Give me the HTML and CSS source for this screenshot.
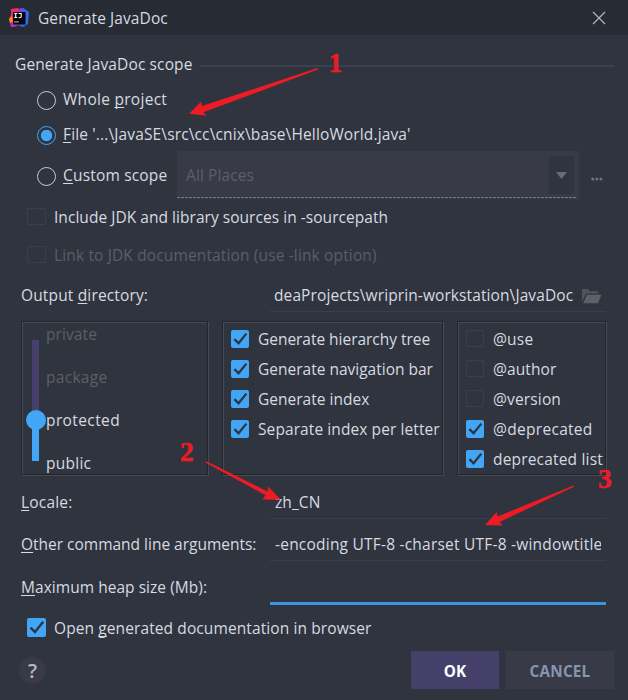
FILE: index.html
```
<!DOCTYPE html>
<html lang="en">
<head>
<meta charset="utf-8">
<title>Generate JavaDoc</title>
<link rel="stylesheet" href="styles.css">
</head>
<body>
<svg class="defs" width="0" height="0"><defs>
  <symbol id="tick" viewBox="0 0 19 19"><path d="M3.6 9.6 8 14 16.2 3.8" fill="none" stroke="#2d3440" stroke-width="2.4"/></symbol>
</defs></svg>
<div class="dialog">
  <header class="titlebar">
    <svg class="logo" viewBox="0 0 20 20">
      <path d="M2 1 9 0 14 5 8 18 2 19 1 14 0 11 2 7Z" fill="#f5266b"/>
      <path d="M0 11 3 8 4 15 1 15Z" fill="#ff8a1c"/>
      <path d="M2 14 6 14 8 18 2 19Z" fill="#b52fc4"/>
      <path d="M10 1 14 0 20 4 19 16 14 19 8 17Z" fill="#3569ee"/>
      <path d="M10 1 14 0 17 3 11 5Z" fill="#6a4be0"/>
      <rect x="4" y="4" width="12.5" height="12.5" fill="#050505"/>
      <path d="M5.2 5.5h3M6.7 5.5v4M5.2 9.5h3M9.5 5.5h2.7v3.1q0 1.1-1.8 1.1h-.8" stroke="#fff" stroke-width="1.1" fill="none"/>
      <path d="M5.3 13.9h4.6" stroke="#a5a5a5" stroke-width="1.2"/>
    </svg>
    <h1 class="name">Generate JavaDoc</h1>
    <svg class="close" viewBox="0 0 14 14"><path d="M1 1 13 13M13 1 1 13" stroke="#b4b6b9" stroke-width="1.2"/></svg>
  </header>

  <div class="group-title"><span class="t-scope">Generate JavaDoc scope</span><i class="rule"></i></div>

  <label class="radio-row"><i class="radio"></i><span class="t-whole">Whole <u>p</u>roject</span></label>
  <label class="radio-row file"><i class="radio on"></i><span class="t-file"><u>F</u>ile '...\JavaSE\src\cc\cnix\base\HelloWorld.java'</span></label>
  <div class="radio-row custom">
    <i class="radio"></i><span class="t-custom"><u>C</u>ustom scope</span>
    <div class="combo"><span class="t-places">All Places</span>
      <div class="combo-button"><svg viewBox="0 0 11 7"><path d="M0 0H11L5.5 7Z" fill="#696c76"/></svg></div>
      <svg class="dashes" viewBox="0 0 400 1"><path d="M0 .5H400" stroke="#777a86" stroke-dasharray="3 1"/></svg>
    </div>
    <svg class="more" viewBox="0 0 12 4"><g fill="#6f727a"><circle cx="1.7" cy="2" r="1.5"/><circle cx="5.8" cy="2" r="1.5"/><circle cx="9.9" cy="2" r="1.5"/></g></svg>
  </div>

  <label class="check-row include"><i class="box"></i><span class="t-include">Include JDK and library sources in -sourcepath</span></label>
  <label class="check-row link"><i class="box"></i><span class="t-link">Link to JDK documentation (use -link option)</span></label>

  <div class="field-row output">
    <span class="t-output">Output <u>d</u>irectory:</span>
    <div class="field"><div class="clip"><span class="t-path">deaProjects\wriprin-workstation\JavaDoc</span></div>
      <svg class="folder" viewBox="0 0 20 15"><path d="M0 13V1.2Q0 0 1.2 0H6L8 2.2H15Q16.3 2.2 16.3 3.5V4.5H5.2Q4.2 4.5 3.7 5.5Z" fill="#50555c"/><path d="M5 5.7H19.5L16 14.3H1.2Z" fill="#5a6168"/></svg>
    </div>
  </div>

  <div class="panels">
    <section class="panel levels">
      <div class="slider"><i class="fill"></i><i class="knob"></i></div>
      <div class="level-names">
        <span class="off t-private">private</span><span class="off t-package">package</span><span class="t-protected">protected</span><span class="t-public">public</span>
      </div>
    </section>
    <section class="panel options">
      <label><i class="box on"><svg><use href="#tick"/></svg></i><span class="t-tree">Generate hierarchy tree</span></label>
      <label><i class="box on"><svg><use href="#tick"/></svg></i><span class="t-nav">Generate navigation bar</span></label>
      <label><i class="box on"><svg><use href="#tick"/></svg></i><span class="t-index">Generate index</span></label>
      <label><i class="box on"><svg><use href="#tick"/></svg></i><span class="t-letter">Separate index per letter</span></label>
    </section>
    <section class="panel tags">
      <label><i class="box"></i><span class="t-use">@use</span></label>
      <label><i class="box"></i><span class="t-author">@author</span></label>
      <label><i class="box"></i><span class="t-version">@version</span></label>
      <label><i class="box on"><svg><use href="#tick"/></svg></i><span class="t-dep">@deprecated</span></label>
      <label><i class="box on"><svg><use href="#tick"/></svg></i><span class="t-list">deprecated list</span></label>
    </section>
  </div>

  <div class="field-row locale"><span class="t-locale"><u>L</u>ocale:</span><div class="field"><span class="t-zh">zh_CN</span></div></div>
  <div class="field-row other"><span class="t-other"><u>O</u>ther command line arguments:</span><div class="field"><div class="clip"><span class="t-args">-encoding UTF-8 -charset UTF-8 -windowtitle</span></div></div></div>
  <div class="field-row heap"><span class="t-heap"><u>M</u>aximum heap size (Mb):</span><div class="field focus"></div></div>

  <label class="check-row open"><i class="box on"><svg><use href="#tick"/></svg></i><span class="t-open">Open <u>g</u>enerated documentation in browser</span></label>

  <footer class="footer">
    <div class="help">?</div>
    <div class="button primary">OK</div>
    <div class="button cancel">CANCEL</div>
  </footer>

  <svg class="marks" viewBox="0 0 628 700">
    <g fill="#ed1c24">
      <path d="M189 113.8 201 101.7 202 106 317.5 68 318 69.6 203.5 112.2 206.7 115.8Z"/>
      <path d="M280.7 499.7 268.3 486.5 267.5 491.5 206.5 461.3 205.8 462.8 265.5 495.2 262.5 499.5Z"/>
      <path d="M485 525 496.7 512 497.5 516.5 573.5 485.4 574 486.8 499.7 522 502.7 525.6Z"/>
    </g>
    <g class="digits"><text x="328.5" y="72">1</text><text x="180" y="460.5">2</text><text x="598" y="488">3</text></g>
  </svg>
</div>
</body>
</html>
```
FILE: styles.css
```
* { box-sizing: border-box; }
body {
  margin: 0;
  background: #30343e;
  color: #d6dae1;
  font: 15.5px/24px "Open Sans", "Noto Sans", sans-serif;
}
.defs { position: absolute; }
i { display: block; flex: none; }
svg { display: block; flex: none; }
span { white-space: nowrap; }
u { text-underline-offset: 2px; text-decoration-thickness: 1px; text-decoration-skip-ink: none; }

.dialog { position: relative; width: 628px; height: 700px; overflow: hidden; }

.titlebar { display: flex; align-items: center; height: 35px; padding: 0 22px 0 9px; background: #272b33; }
.logo { width: 20px; height: 20px; }
.name { flex: 1; margin: 0 0 0 9px; font-size: 15.5px; font-weight: 400; letter-spacing: .08px; }
.close { width: 14px; height: 14px; }

.group-title { display: flex; align-items: center; gap: 7px; height: 24px; margin: 17px 14px 0 15px; }
.rule { flex: 1; height: 2px; margin-top: 4px; background: #3b3f4e; }

.radio-row { display: flex; align-items: center; height: 30px; margin: 8px 0 0 37px; }
.radio-row span { margin-left: 7px; }
.radio-row.file { margin-top: 5px; }
.radio-row.custom { height: 48px; margin-top: 2px; padding-right: 25px; }
.radio { width: 19px; height: 19px; margin-top: 2px; border: 1.5px solid #c8cbd6; border-radius: 50%; }
.radio.on { border-color: #42a5f5; background: radial-gradient(circle, #42a5f5 5.3px, transparent 6.1px); }
.combo { position: relative; display: flex; align-items: center; width: 402px; height: 48px; margin-left: auto; background: #383a48; color: #5c5f6b; }
.combo-button { display: flex; align-items: center; justify-content: center; width: 25px; height: 38px; margin: 0 5px 0 auto; background: #30343e; }
.combo-button svg { width: 11px; height: 7px; }
.dashes { position: absolute; left: 0; bottom: 1px; width: 400px; height: 1px; }
.more { width: 12px; height: 4px; margin: 8px 0 0 12px; }

.check-row { display: flex; align-items: center; gap: 8px; height: 26px; margin-left: 27px; }
.include { margin-top: 5px; }
.link { margin-top: 12px; color: #5b5e67; }
.open { margin-top: 11px; }
.box { width: 19px; height: 17px; margin-top: -2px; border: 1px solid #3b3e4d; border-radius: 1px; }
.box.on { height: 19px; margin-top: -1px; border: 0; border-radius: 2px; background: #42a5f5; }
.box svg { width: 100%; height: 100%; }

.field-row { display: grid; grid-template-columns: 249px 336px; align-items: start; margin-left: 21px; }
.field { display: flex; height: 29px; padding-left: 4px; border-bottom: 1px solid #3b3e4d; }
.clip { width: 327px; overflow: hidden; }
.output { margin-top: 15px; }
.output .clip { width: 300px; }
.folder { width: 20px; height: 15px; margin: 6px 0 0 8px; }

.panels { display: grid; grid-template: 154px / 187px 221px 149px; gap: 14px; margin: 9px 0 0 21px; }
.panel { min-width: 0; border: 1px solid #22252c; box-shadow: 1px 1px #464a55, inset 1px 1px #464a55; }
.levels { display: flex; }
.slider { position: relative; width: 7px; height: 121px; margin: 18px 0 0 10px; background: #45416a; }
.fill { height: 41px; margin-top: 80px; background: #42a5f5; }
.knob { position: absolute; left: -6px; top: 70px; width: 20px; height: 20px; border-radius: 50%; background: #42a5f5; }
.level-names { display: flex; flex-direction: column; gap: 19px; margin-left: 7px; }
.off { color: #5e5f63; }
.options, .tags { padding: 2px 0 0 8px; }
.panel label { display: flex; align-items: center; gap: 9px; height: 30px; }
.panel .box { width: 18px; }
.panel .box.on { height: 18px; }

.locale { margin-top: 15px; }
.other { margin-top: 13px; }
.heap { margin-top: 14px; }
.field.focus { height: 30px; margin-bottom: -1px; border-bottom: 3px solid #3c94dc; }

.footer { display: flex; align-items: center; gap: 7px; height: 38px; margin: 10px 14px 0 19px; }
.help { width: 27px; height: 27px; margin-right: auto; border-radius: 50%; background: #383a48; color: #b7b9bf; font: 600 20px/27px "Open Sans", sans-serif; text-align: center; }
.button { height: 38px; font-size: 15.3px; font-weight: 700; line-height: 41px; text-align: center; }
.primary { width: 88px; background: #44406a; color: #fff; }
.cancel { width: 108px; background: #383a48; color: #8496b0; letter-spacing: .2px; }

.marks { position: absolute; inset: 0; width: 628px; height: 700px; }
.digits { fill: #ed1c24; stroke: #ed1c24; stroke-width: .5px; font: 700 27.5px "Liberation Serif", serif; }

.t-scope { letter-spacing: .12px; }
.t-whole { letter-spacing: .28px; }
.t-file { letter-spacing: .14px; }
.t-custom { letter-spacing: .18px; }
.custom .t-places { margin-left: 9px; letter-spacing: .1px; }
.t-include { letter-spacing: .04px; }
.t-link { letter-spacing: .14px; }
.t-output { letter-spacing: .15px; }
.t-path { letter-spacing: .1px; }
.t-private { letter-spacing: .1px; }
.t-package { letter-spacing: .3px; }
.t-protected { letter-spacing: .4px; }
.t-public { letter-spacing: .25px; }
.t-tree { letter-spacing: -.03px; }
.t-index { letter-spacing: .02px; }
.t-letter { letter-spacing: .09px; }
.t-use { letter-spacing: .2px; }
.t-author { letter-spacing: .1px; }
.t-version { letter-spacing: .15px; }
.t-dep { letter-spacing: .3px; }
.t-list { letter-spacing: .18px; }
.t-locale { letter-spacing: .2px; }
.t-other { letter-spacing: -.01px; }
.t-heap { letter-spacing: .04px; }
.t-zh { margin-left: 1px; letter-spacing: .1px; }
.t-args { margin-left: 1px; letter-spacing: .22px; }
.t-open { letter-spacing: .1px; }
```
